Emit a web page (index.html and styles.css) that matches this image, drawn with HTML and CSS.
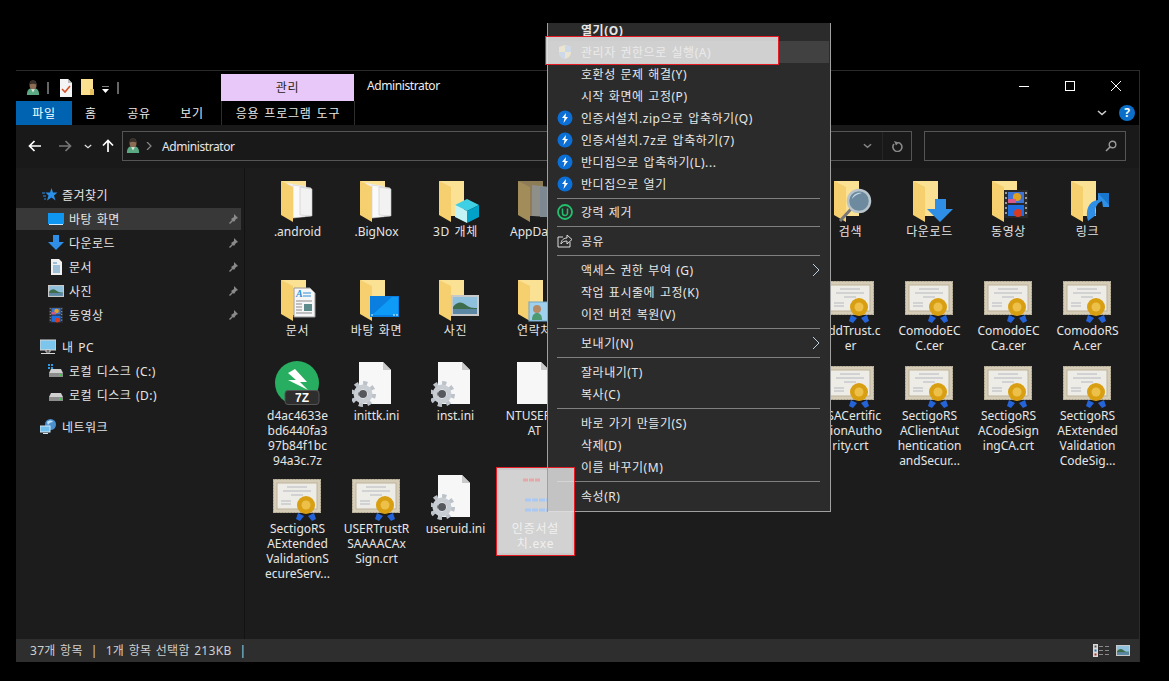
FILE: index.html
```html
<!DOCTYPE html>
<html lang="ko">
<head>
<meta charset="utf-8">
<title>Administrator</title>
<link rel="stylesheet" href="styles.css">
</head>
<body>
<svg class="defs" width="0" height="0" aria-hidden="true">
  <defs>
    <symbol id="person" viewBox="0 0 16 18">
      <path d="M1 17c0-5 2-8 7-8s7 3 7 8z" fill="#5aa982"/>
      <path d="M6 10l2 4 2-4z" fill="#e3eee5"/>
      <ellipse cx="8" cy="5.500" rx="4" ry="5" fill="#8c6c52"/>
      <path d="M4 5c0-3 2-5 4-5s4 2 4 5c-2-1-6-1-8 0z" fill="#38312b"/>
    </symbol>
    <symbol id="f" viewBox="0 0 48 48">
      <path d="M8 4h25v35H20z" fill="#fbe193"/>
      <path d="M8 4l12 6v35L8 38z" fill="#f6cf6f"/>
    </symbol>
    <symbol id="fdocs" viewBox="0 0 48 48">
      <path d="M8 4h25v35H20z" fill="#fbe193"/>
      <path d="M14 6l18 3v31l-18-3z" fill="#eeeeee"/>
      <path d="M20 8l18 3v28l-18 2z" fill="#fafafa" stroke="#d0d0d0" stroke-width=".6"/>
      <path d="M27 10l12 2v27l-12-1z" fill="#f2f2f2" stroke="#c8c8c8" stroke-width=".6"/>
      <path d="M8 4l12 6v35L8 38z" fill="#f6cf6f"/>
    </symbol>
    <symbol id="f3d" viewBox="0 0 48 48">
      <use href="#f" width="48" height="48"/>
      <path d="M24 28l12-6 12 6-12 6z" fill="#3fd0e6"/>
      <path d="M24 28l12 6v12l-12-6z" fill="#c2f3f5"/>
      <path d="M48 28l-12 6v12l12-6z" fill="#00a2c7"/>
    </symbol>
    <symbol id="fapp" viewBox="0 0 48 48">
      <path d="M8 4h25v35H20z" fill="#8d7c55"/>
      <path d="M22 8l18 2v30l-18-1z" fill="#8f8f8a"/>
      <path d="M30 10h10v30H30z" fill="#7d8892"/>
      <path d="M8 4l12 6v35L8 38z" fill="#a18c5a"/>
    </symbol>
    <symbol id="fdoc" viewBox="0 0 48 48">
      <use href="#f" width="48" height="48"/>
      <path d="M21 12h16l5 5v24H21z" fill="#f6f6f6" stroke="#9a9a9a"/>
      <text x="23" y="21" class="sym-a">A</text>
      <path d="M30 17h8M30 20h8" stroke="#2f8fd8"/>
      <path d="M23 25h16M23 28h6M23 31h6M23 34h6M23 37h16" stroke="#8a8a8a"/>
      <rect x="31" y="28" width="8" height="7" fill="#5d8a8a"/>
    </symbol>
    <symbol id="fdesk" viewBox="0 0 48 48">
      <use href="#f" width="48" height="48"/>
      <rect x="18" y="20" width="29" height="21" fill="#0a7fe0"/>
      <path d="M20 39l20-18h6v18z" fill="#0d9bf7"/>
      <path d="M19 39h2M41 39h2M44 39h2" stroke="#dff"/>
    </symbol>
    <symbol id="fpic" viewBox="0 0 48 48">
      <use href="#f" width="48" height="48"/>
      <use href="#photo" x="20" y="19" width="28" height="21"/>
    </symbol>
    <symbol id="photo" viewBox="0 0 28 21" preserveAspectRatio="none">
      <rect width="28" height="21" fill="#c9c9c9"/>
      <rect x="2" y="2" width="24" height="17" fill="#8fc0dc"/>
      <path d="M2 12c5-6 9-5 13-2s7 3 11 3v2H2z" fill="#3e6d4d"/>
      <rect x="2" y="14" width="24" height="5" fill="#5c87a4"/>
    </symbol>
    <symbol id="fcontact" viewBox="0 0 48 48">
      <use href="#f" width="48" height="48"/>
      <rect x="19" y="26" width="29" height="19" fill="#9fd0ee" stroke="#6fa6c8"/>
      <circle cx="27" cy="33" r="4" fill="#b78a66"/>
      <path d="M22 44c0-5 2-7 5-7s5 2 5 7z" fill="#4d9a72"/>
    </symbol>
    <symbol id="fsearch" viewBox="0 0 48 48">
      <use href="#f" width="48" height="48"/>
      <path d="M14 44l11-12" stroke="#777" stroke-width="3"/>
      <circle cx="33" cy="24" r="11" fill="#6d8a9e" stroke="#b9c4cb" stroke-width="2.500"/>
      <path d="M26 22c1-5 6-7 10-6-5 1-8 3-10 6z" fill="#c4dbe8"/>
    </symbol>
    <symbol id="fdown" viewBox="0 0 48 48">
      <use href="#f" width="48" height="48"/>
      <path d="M30 22h11v10h7L35 45 22 32h8z" fill="#2f8fe6"/>
    </symbol>
    <symbol id="film" viewBox="0 0 24 28">
      <rect width="24" height="28" fill="#2a2a2a"/>
      <path d="M1 2h2v2H1zM1 7h2v2H1zM1 12h2v2H1zM1 17h2v2H1zM1 22h2v2H1zM21 2h2v2h-2zM21 7h2v2h-2zM21 12h2v2h-2zM21 17h2v2h-2zM21 22h2v2h-2z" fill="#999"/>
      <rect x="4" y="2" width="16" height="11" fill="#3d74d6"/>
      <rect x="4" y="15" width="16" height="11" fill="#1f6ee0"/>
      <circle cx="13" cy="7" r="4" fill="#e0a020"/>
      <rect x="4" y="9" width="8" height="4" fill="#d85a8a"/>
      <circle cx="14" cy="23" r="4" fill="#d83a20"/>
    </symbol>
    <symbol id="fvideo" viewBox="0 0 48 48">
      <use href="#f" width="48" height="48"/>
      <use href="#film" x="20" y="13" width="24" height="28"/>
    </symbol>
    <symbol id="flink" viewBox="0 0 48 48">
      <use href="#f" width="48" height="48"/>
      <path d="M25 44c-3-10 0-20 10-21v-7l11 0v14h-6l-1-6c-5 2-8 7-6 14z" fill="#2f8fe6"/>
      <path d="M35 16l11 0v12z" fill="#1877cc"/>
    </symbol>
    <symbol id="cert" viewBox="0 0 48 48">
      <rect x="0" y="5" width="48" height="34" fill="#d6cdb9"/>
      <rect x=".5" y="5.500" width="47" height="33" fill="none" stroke="#a89f8a" stroke-dasharray="2 1"/>
      <rect x="4" y="9" width="40" height="26" fill="#eeece6" stroke="#bdb49c"/>
      <path d="M14 13h20M10 17h28M18 21h12M8 27h10M8 30h10" stroke="#b5b8c0"/>
      <path d="M25 39l-2 6 4 2 4-5zM41 39l2 6-4 2-4-5z" fill="#2464d8"/>
      <circle cx="33" cy="31" r="9" fill="#d99f13"/>
      <circle cx="33" cy="31" r="4.500" fill="#edc04a"/>
    </symbol>
    <symbol id="page" viewBox="0 0 48 48">
      <path d="M7 1h24l8 8v34H7z" fill="#f7f7f7"/>
      <path d="M31 1l8 8h-8z" fill="#c9c9c9"/>
    </symbol>
    <symbol id="gearpage" viewBox="0 0 48 48">
      <use href="#page" width="48" height="48"/>
      <circle cx="11" cy="33" r="11" fill="none" stroke="#bcc2c9" stroke-width="4" stroke-dasharray="4.200 4.400"/>
      <circle cx="11" cy="33" r="7" fill="none" stroke="#c8cdd3" stroke-width="5"/>
      <circle cx="11" cy="33" r="4" fill="#55585c"/>
    </symbol>
    <symbol id="zip" viewBox="0 0 48 48">
      <circle cx="24" cy="22" r="22" fill="#27ae60"/>
      <path d="M22 8l12 13h-7l8 8-20-10h8l-8-7z" fill="#fff"/>
      <rect x="12" y="29.500" width="34" height="14" rx="3" fill="#2e2e2e" stroke="#555"/>
      <text x="29" y="41" class="sym-7z">7Z</text>
    </symbol>
    <symbol id="bolt" viewBox="0 0 16 16">
      <circle cx="8" cy="8" r="7.500" fill="#0b6fd6"/>
      <path d="M9 3L5 8h2.500L6.500 13 11 7H8.500z" fill="#fff"/>
    </symbol>
    <symbol id="pin" viewBox="0 0 12 12">
      <path d="M7 1l4 4-2 1-2 3-1-1-3 3-1-1 3-3-1-1 3-2z" fill="#8a8a8a"/>
    </symbol>
    <symbol id="chev" viewBox="0 0 10 6">
      <path d="M1 1l4 3.500L9 1" fill="none" stroke="currentColor" stroke-width="1.600"/>
    </symbol>
    <symbol id="disk" viewBox="0 0 16 16">
      <path d="M3 6h10l2 4v4H1v-4z" fill="#d0d0d0"/>
      <rect x="1" y="10" width="14" height="4" fill="#8d8d8d"/>
      <rect x="11" y="11" width="2" height="2" fill="#3ed04a"/>
    </symbol>
  </defs>
</svg>

<div class="stage">
  <div class="window">
    <header class="titlebar">
      <div class="qat">
        <svg class="qi"><use href="#person"/></svg>
        <span class="qsep qsep-a"></span>
        <svg class="qi qnote" viewBox="0 0 14 18"><path d="M1 0h8l4 4v14H1z" fill="#f4f4f4"/><path d="M9 0l4 4H9z" fill="#bbb"/><path d="M3 10l3 3 5-6" fill="none" stroke="#d8502a" stroke-width="1.600"/></svg>
        <svg class="qi qfolder" viewBox="0 0 14 18"><rect width="12" height="16" fill="#fbe08f"/><rect x="9" y="10" width="4" height="6" fill="#e8c060"/></svg>
        <svg class="qdrop" viewBox="0 0 9 8"><path d="M1 0h7" stroke="#fff"/><path d="M1 3h7L4.500 7z" fill="#fff"/></svg>
        <span class="qsep qsep-b"></span>
      </div>
      <div class="manage">관리</div>
      <div class="wintitle">Administrator</div>
      <div class="wincontrols">
        <span class="wc"><svg viewBox="0 0 10 10"><path d="M0 5.500h10" stroke="#fff"/></svg></span>
        <span class="wc"><svg viewBox="0 0 10 10"><rect x=".5" y=".5" width="9" height="9" fill="none" stroke="#fff"/></svg></span>
        <span class="wc"><svg viewBox="0 0 10 10"><path d="M0 0l10 10M10 0L0 10" stroke="#fff"/></svg></span>
      </div>
    </header>

    <nav class="tabs">
      <span class="tab tab-file">파일</span>
      <span class="tab tab-home">홈</span>
      <span class="tab tab-share">공유</span>
      <span class="tab tab-view">보기</span>
      <span class="tab tab-tools">응용 프로그램 도구</span>
      <svg class="ribbon-chev"><use href="#chev"/></svg>
      <span class="help">?</span>
    </nav>

    <div class="toolbar">
      <span class="nb nb-back"><svg viewBox="0 0 14 12"><path d="M13 6H2M6.500 1L1.500 6l5 5" fill="none" stroke="#fff" stroke-width="1.700"/></svg></span>
      <span class="nb nb-fwd"><svg viewBox="0 0 14 12"><path d="M1 6h11M7.500 1l5 5-5 5" fill="none" stroke="#777" stroke-width="1.700"/></svg></span>
      <span class="nb nb-down"><svg class="small-chev"><use href="#chev"/></svg></span>
      <span class="nb nb-up"><svg viewBox="0 0 12 14"><path d="M6 13V2M1 6.500l5-5 5 5" fill="none" stroke="#fff" stroke-width="1.700"/></svg></span>
      <div class="addr">
        <svg class="addr-person"><use href="#person"/></svg>
        <svg class="addr-sep" viewBox="0 0 6 8"><path d="M1 0l4 4-4 4" fill="none" stroke="#888" stroke-width="1.200"/></svg>
        <span class="addr-text">Administrator</span>
        <svg class="addr-chev"><use href="#chev"/></svg>
        <span class="addr-div"></span>
        <svg class="addr-refresh" viewBox="0 0 12 12"><path d="M7 2.500a4.500 4.500 0 1 1-4 1.500" fill="none" stroke="#888" stroke-width="1.600"/><path d="M3 1l5 1.500-3 3z" fill="#888"/></svg>
      </div>
      <div class="search">
        <svg viewBox="0 0 12 12"><circle cx="7.500" cy="4.500" r="3.300" fill="none" stroke="#999" stroke-width="1.400"/><path d="M5 7l-4 4" stroke="#999" stroke-width="1.600"/></svg>
      </div>
    </div>

    <main class="main">
      <aside class="nav">
        <div class="navgroup">
          <div class="nr nr1"><svg viewBox="0 0 16 16"><path d="M9.500 1l1.500 4.500h4.500l-3.500 3 1.500 5L9.500 10.500 5 13.500l1.500-5-3-3h4.500z" fill="#2a8fe8"/><path d="M0 6h3M1 9h3M2 12h2" stroke="#2a8fe8"/></svg><span>즐겨찾기</span></div>
          <div class="nr nr2 nr-active"><svg viewBox="0 0 16 16"><rect y="2" width="16" height="11" fill="#0f95f2"/><path d="M1 13.500h14" stroke="#cdeaff"/></svg><span>바탕 화면</span><svg class="pin"><use href="#pin"/></svg></div>
          <div class="nr nr2"><svg viewBox="0 0 16 16"><path d="M5 0h6v7h5l-8 8-8-8h5z" fill="#2f8fe6"/></svg><span>다운로드</span><svg class="pin"><use href="#pin"/></svg></div>
          <div class="nr nr2"><svg viewBox="0 0 16 16"><path d="M3 0h8l3 3v13H3z" fill="#f0f0f0"/><path d="M5 4h4M5 7h7M5 9h7M5 11h7M5 13h7" stroke="#4a8fc0"/></svg><span>문서</span><svg class="pin"><use href="#pin"/></svg></div>
          <div class="nr nr2"><svg viewBox="0 0 16 16"><use href="#photo" y="2" width="16" height="12"/></svg><span>사진</span><svg class="pin"><use href="#pin"/></svg></div>
          <div class="nr nr2"><svg viewBox="0 0 16 16"><use href="#film" x="1" width="14" height="16"/></svg><span>동영상</span><svg class="pin"><use href="#pin"/></svg></div>
        </div>
        <div class="navgroup">
          <div class="nr nr1 nr-pc"><svg viewBox="0 0 16 16"><rect y="1" width="16" height="10" fill="#7cc6ee" stroke="#d8d8d8"/><path d="M6 11h4v2H6zM1 14.500h14" stroke="#d8d8d8"/></svg><span>내 PC</span></div>
          <div class="nr nr2"><svg viewBox="0 0 16 16"><use href="#disk" width="16" height="16"/><path d="M0 1h2v2H0zM3 1h2v2H3zM0 4h2v2H0zM3 4h2v2H3z" fill="#2a9be8"/></svg><span>로컬 디스크 (C:)</span></div>
          <div class="nr nr2"><svg viewBox="0 0 16 16"><use href="#disk" width="16" height="16"/></svg><span>로컬 디스크 (D:)</span></div>
        </div>
        <div class="navgroup">
          <div class="nr nr1 nr-pc"><svg viewBox="0 0 16 16"><circle cx="10.500" cy="5.500" r="5.500" fill="#4a90d0"/><path d="M7 3c2-2 5-2 6 0-2 0-4 1-5 3z" fill="#bfe0f5"/><rect y="7" width="10" height="6" fill="#6fbdea" stroke="#cfe6f5"/><path d="M3 14.500h5" stroke="#cfe6f5"/></svg><span>네트워크</span></div>
        </div>
      </aside>

      <section class="files">
        <div class="cell"><svg class="ico"><use href="#fdocs"/></svg><p class="lb">.android</p></div>
        <div class="cell"><svg class="ico"><use href="#fdocs"/></svg><p class="lb">.BigNox</p></div>
        <div class="cell"><svg class="ico"><use href="#f3d"/></svg><p class="lb lb-ko">3D 개체</p></div>
        <div class="cell"><svg class="ico"><use href="#fapp"/></svg><p class="lb">AppData</p></div>
        <div class="cell"></div><div class="cell"></div><div class="cell"></div>
        <div class="cell"><svg class="ico"><use href="#fsearch"/></svg><p class="lb lb-ko">검색</p></div>
        <div class="cell"><svg class="ico"><use href="#fdown"/></svg><p class="lb lb-ko">다운로드</p></div>
        <div class="cell"><svg class="ico"><use href="#fvideo"/></svg><p class="lb lb-ko">동영상</p></div>
        <div class="cell"><svg class="ico"><use href="#flink"/></svg><p class="lb lb-ko">링크</p></div>

        <div class="cell"><svg class="ico"><use href="#fdoc"/></svg><p class="lb lb-ko">문서</p></div>
        <div class="cell"><svg class="ico"><use href="#fdesk"/></svg><p class="lb lb-ko">바탕 화면</p></div>
        <div class="cell"><svg class="ico"><use href="#fpic"/></svg><p class="lb lb-ko">사진</p></div>
        <div class="cell"><svg class="ico"><use href="#fcontact"/></svg><p class="lb lb-ko">연락처</p></div>
        <div class="cell"></div><div class="cell"></div><div class="cell"></div>
        <div class="cell"><svg class="ico"><use href="#cert"/></svg><p class="lb">AddTrust.c<br>er</p></div>
        <div class="cell"><svg class="ico"><use href="#cert"/></svg><p class="lb">ComodoEC<br>C.cer</p></div>
        <div class="cell"><svg class="ico"><use href="#cert"/></svg><p class="lb">ComodoEC<br>Ca.cer</p></div>
        <div class="cell"><svg class="ico"><use href="#cert"/></svg><p class="lb">ComodoRS<br>A.cer</p></div>

        <div class="cell"><svg class="ico"><use href="#zip"/></svg><p class="lb">d4ac4633e<br>bd6440fa3<br>97b84f1bc<br>94a3c.7z</p></div>
        <div class="cell"><svg class="ico"><use href="#gearpage"/></svg><p class="lb">inittk.ini</p></div>
        <div class="cell"><svg class="ico"><use href="#gearpage"/></svg><p class="lb">inst.ini</p></div>
        <div class="cell"><svg class="ico"><use href="#page"/></svg><p class="lb">NTUSER.D<br>AT</p></div>
        <div class="cell"></div><div class="cell"></div><div class="cell"></div>
        <div class="cell"><svg class="ico"><use href="#cert"/></svg><p class="lb">RSACertific<br>ationAutho<br>rity.crt</p></div>
        <div class="cell"><svg class="ico"><use href="#cert"/></svg><p class="lb">SectigoRS<br>AClientAut<br>hentication<br>andSecur...</p></div>
        <div class="cell"><svg class="ico"><use href="#cert"/></svg><p class="lb">SectigoRS<br>ACodeSign<br>ingCA.crt</p></div>
        <div class="cell"><svg class="ico"><use href="#cert"/></svg><p class="lb">SectigoRS<br>AExtended<br>Validation<br>CodeSig...</p></div>

        <div class="cell"><svg class="ico"><use href="#cert"/></svg><p class="lb">SectigoRS<br>AExtended<br>ValidationS<br>ecureServ...</p></div>
        <div class="cell"><svg class="ico"><use href="#cert"/></svg><p class="lb">USERTrustR<br>SAAAACAx<br>Sign.crt</p></div>
        <div class="cell"><svg class="ico"><use href="#gearpage"/></svg><p class="lb">useruid.ini</p></div>
        <div class="cell cell-sel">
          <svg class="ico ico-exe" viewBox="0 0 48 48"><path d="M12 6h18" stroke="#e6a7a7" stroke-width="3" stroke-dasharray="5 1"/><path d="M14 26h22" stroke="#a9c8f2" stroke-width="3" stroke-dasharray="6 1"/><path d="M14 36h24" stroke="#a9c8f2" stroke-width="3" stroke-dasharray="6 1"/></svg>
          <p class="lb lb-sel">인증서설<br>치.exe</p>
        </div>
      </section>
    </main>

    <footer class="status">
      <span class="st-a">37개 항목</span><span class="st-bar">|</span><span class="st-b">1개 항목 선택함 213KB</span><span class="st-bar">|</span>
      <span class="st-views">
        <svg class="st-list" viewBox="0 0 16 13"><rect width="5" height="13" fill="#d8d8d8"/><rect x="1.500" y="1.500" width="2" height="2" fill="#555"/><rect x="1.500" y="5.500" width="2" height="2" fill="#2a6fb0"/><rect x="1.500" y="9.500" width="2" height="2" fill="#b03030"/><path d="M6 2.500h4M12 2.500h4M6 6.500h4M12 6.500h4M6 10.500h4M12 10.500h4" stroke="#8a8a8a"/></svg>
        <svg class="st-thumb"><use href="#photo"/></svg>
      </span>
    </footer>
  </div>
</div>

<div class="menu">
  <div class="mlist">
    <div class="mi mi-bold"><i class="mic"></i>열기(O)</div>
    <div class="mi mi-hover"><svg class="mic" viewBox="0 0 16 16"><path d="M8 1l6 2v5c0 4-3 6-6 7-3-1-6-3-6-7V3z" fill="#f0c040"/><path d="M8 1l6 2v5H8zM8 8v7c-3-1-6-3-6-7z" fill="#2a7be0"/></svg>관리자 권한으로 실행(A)</div>
    <div class="mi"><i class="mic"></i>호환성 문제 해결(Y)</div>
    <div class="mi"><i class="mic"></i>시작 화면에 고정(P)</div>
    <div class="mi"><svg class="mic"><use href="#bolt"/></svg>인증서설치.zip으로 압축하기(Q)</div>
    <div class="mi"><svg class="mic"><use href="#bolt"/></svg>인증서설치.7z로 압축하기(7)</div>
    <div class="mi"><svg class="mic"><use href="#bolt"/></svg>반디집으로 압축하기(L)...</div>
    <div class="mi"><svg class="mic"><use href="#bolt"/></svg>반디집으로 열기</div>
    <div class="msep msep-tight"></div>
    <div class="mi"><svg class="mic" viewBox="0 0 16 16"><circle cx="8" cy="8" r="7" fill="none" stroke="#22c06e" stroke-width="1.800"/><path d="M5.500 4.500V9a2.500 2.500 0 0 0 5 0V4.500" fill="none" stroke="#22c06e" stroke-width="1.500"/></svg>강력 제거</div>
    <div class="msep"></div>
    <div class="mi"><svg class="mic" viewBox="0 0 16 16"><path d="M6 4H1v10h12V9" fill="none" stroke="#ddd"/><path d="M4 11c0-4 3-6 6-6V2l5 4.500L10 11V8c-3 0-5 1-6 3z" fill="none" stroke="#ddd"/></svg>공유</div>
    <div class="msep"></div>
    <div class="mi"><i class="mic"></i>액세스 권한 부여 (G)<svg class="marrow" viewBox="0 0 8 14"><path d="M1 1l6 6-6 6" fill="none" stroke="#bcd0e0"/></svg></div>
    <div class="mi"><i class="mic"></i>작업 표시줄에 고정(K)</div>
    <div class="mi"><i class="mic"></i>이전 버전 복원(V)</div>
    <div class="msep"></div>
    <div class="mi"><i class="mic"></i>보내기(N)<svg class="marrow" viewBox="0 0 8 14"><path d="M1 1l6 6-6 6" fill="none" stroke="#bcd0e0"/></svg></div>
    <div class="msep"></div>
    <div class="mi"><i class="mic"></i>잘라내기(T)</div>
    <div class="mi"><i class="mic"></i>복사(C)</div>
    <div class="msep"></div>
    <div class="mi"><i class="mic"></i>바로 가기 만들기(S)</div>
    <div class="mi"><i class="mic"></i>삭제(D)</div>
    <div class="mi"><i class="mic"></i>이름 바꾸기(M)</div>
    <div class="msep"></div>
    <div class="mi"><i class="mic"></i>속성(R)</div>
  </div>
</div>
<div class="mark mark-run"></div>
<div class="mark mark-exe"></div>
</body>
</html>
```

FILE: styles.css
```css
* { box-sizing: border-box; }
html, body { margin: 0; height: 100%; }
body {
  background: #000;
  color: #e6e6e6;
  font: 12px/15px "Noto Sans", "Noto Sans CJK KR", sans-serif;
  overflow: hidden;
}
.defs { position: absolute; }
.sym-a { font: italic 700 10px "Liberation Serif", serif; fill: #2f8fd8; }
.sym-7z { font: 700 12px "Liberation Sans", sans-serif; fill: #fff; text-anchor: middle; }

.stage { height: 681px; padding: 70px 29px 19px 16px; }
.window {
  height: 592px;
  display: flex;
  flex-direction: column;
  border-top: 1px solid #2b2b2b;
  border-right: 1px solid #2b2b2b;
}

/* title bar */
.titlebar { height: 30px; display: flex; background: #000; flex: none; }
.qat { width: 205px; display: flex; align-items: center; padding: 3px 0 0 10px; }
.qi { width: 14px; height: 18px; }
.qsep { width: 2px; height: 12px; background: #666; }
.qsep-a { margin: 0 10px 0 7px; }
.qsep-b { margin: 0 0 0 7px; }
.qnote { margin-right: 8px; }
.qfolder { margin-right: 6px; }
.qdrop { width: 9px; height: 8px; margin-top: 4px; }
.manage {
  width: 133px; margin-top: 3px; letter-spacing: .6px;
  background: #e8c8f8; color: #222;
  display: flex; align-items: center; justify-content: center;
}
.wintitle { padding-left: 13px; line-height: 30px; color: #eee; letter-spacing: -.4px; }
.wincontrols { margin-left: auto; display: flex; }
.wc { width: 46px; height: 29px; display: flex; align-items: center; justify-content: center; }
.wc svg { width: 10px; height: 10px; }

/* ribbon tabs */
.tabs { height: 24px; display: flex; align-items: stretch; background: #000; flex: none; padding-right: 4px; }
.tab { display: flex; align-items: center; justify-content: center; color: #e8e8e8; letter-spacing: .8px; word-spacing: 1px; }
.tab-file { width: 56px; background: #0063b1; color: #fff; }
.tab-home { width: 38px; }
.tab-share { width: 58px; }
.tab-view { width: 48px; margin-right: 5px; }
.tab-tools { width: 134px; border-left: 1px solid #2e2e2e; border-right: 1px solid #2e2e2e; }
.ribbon-chev { width: 10px; height: 6px; margin: 9px 0 0 auto; color: #ccc; }
.help {
  width: 16px; height: 16px; margin: 4px 0 0 12px; border-radius: 50%;
  background: #0b6fc9; color: #fff; font-weight: 700; text-align: center; line-height: 16px;
}

/* toolbar */
.toolbar { height: 43px; background: #191919; display: flex; align-items: flex-start; padding: 6px 13px 0 4px; flex: none; }
.nb { height: 30px; display: flex; align-items: center; justify-content: center; }
.nb svg { width: 14px; height: 12px; }
.nb-back, .nb-fwd { width: 30px; }
.nb-down { width: 16px; }
.nb-down .small-chev { width: 8px; height: 5px; color: #ddd; }
.nb-up { width: 24px; margin-right: 2px; }
.nb-up svg { width: 12px; height: 14px; }
.addr {
  width: 791px; height: 30px; border: 1px solid #555;
  display: flex; align-items: center; padding-left: 3px;
}
.addr-person { width: 14px; height: 16px; }
.addr-sep { width: 6px; height: 8px; margin-left: 6px; }
.addr-text { margin-left: 10px; color: #e6e6e6; letter-spacing: -.4px; }
.addr-chev { width: 9px; height: 6px; margin-left: auto; color: #888; }
.addr-div { width: 1px; height: 28px; background: #262626; margin: 0 8px 0 10px; }
.addr-refresh { width: 12px; height: 12px; margin-right: 8px; }
.search {
  width: 202px; height: 30px; margin-left: 12px; border: 1px solid #555;
  display: flex; align-items: center; justify-content: flex-end; padding-right: 8px;
}
.search svg { width: 12px; height: 12px; }

/* main */
.main { flex: 1; min-height: 0; display: flex; background: #1c1c1c; }
.nav {
  width: 228px; flex: none; padding-top: 16px;
  display: flex; flex-direction: column; gap: 10px;
}
.navgroup { display: flex; flex-direction: column; gap: 2px; width: 225px; }
.nr { height: 22px; display: flex; align-items: center; color: #e6e6e6; letter-spacing: .5px; word-spacing: 1px; }
.nr > svg:first-child { width: 16px; height: 16px; flex: none; }
.nr1 { padding-left: 26px; gap: 4px; }
.nr-pc { padding-left: 24px; gap: 6px; }
.nr2 { padding-left: 32px; gap: 5px; }
.nr-active { background: #383838; }
.pin { width: 12px; height: 12px; margin-left: auto; margin-right: 2px; }

.files {
  flex: 1; min-width: 0;
  border-left: 1px solid #121212;
  padding: 2px 0 0 13px;
  display: grid;
  grid-template-columns: repeat(11, 79px);
  grid-template-rows: 99px 85px 113px auto;
  align-items: start;
}
.cell { padding-top: 7px; }
.ico { display: block; width: 48px; height: 48px; margin-left: 15px; }
.lb { margin: -1px 0 0; text-align: center; white-space: nowrap; color: #e6e6e6; line-height: 15px; }
.lb-ko { letter-spacing: .6px; word-spacing: 1px; }

.cell-sel {
  background: #d2d2d2;
  box-shadow: inset 0 0 0 1px #e31c25, inset 0 0 0 3px #c8c8c8;
  margin: 0 -1px 0 1px;
  padding-bottom: 5px;
}
.lb-sel { color: #f0f0f0; letter-spacing: .8px; }

/* status bar */
.status {
  height: 23px; flex: none; background: #2e2e2e; color: #cfcfcf; letter-spacing: .3px; word-spacing: 1px;
  display: flex; align-items: center; padding-left: 14px;
}
.st-bar { margin: 0 8px 0 8px; }
.st-views { margin-left: auto; display: flex; align-items: center; gap: 7px; padding-right: 9px; }
.st-list { width: 16px; height: 13px; }
.st-thumb { width: 14px; height: 11px; }

/* context menu */
.menu {
  position: absolute; left: 547px; top: 23px; width: 284px; height: 489px;
  overflow: hidden; background: #2b2b2b;
  border: 1px solid #a0a0a0; border-top: 0;
  letter-spacing: .55px; word-spacing: 1px;
  z-index: 2;
}
.mlist { margin-top: -4px; }
.mi {
  height: 22px; display: flex; align-items: center;
  padding: 0 10px 0 9px; color: #e6e6e6;
}
.mi-bold { font-weight: 700; }
.mi-hover { background: #414141; margin: 0 1px; padding-left: 8px; }
.mic { width: 16px; height: 16px; margin-right: 8px; flex: none; display: block; }
.marrow { width: 8px; height: 14px; margin-left: auto; }
.msep { height: 7px; display: flex; align-items: center; padding: 0 10px 0 9px; }
.msep::before { content: ""; flex: 1; height: 1px; background: #808080; }
.msep-tight { height: 6px; }

.mark { position: absolute; z-index: 3; }
.mark-run {
  left: 545px; top: 36px; width: 234px; height: 29px;
  background: rgba(234, 234, 234, .85);
  border: 1px solid #e31c25;
}
.mark-exe {
  left: 548px; top: 467px; width: 27px; height: 45px;
  background: rgba(234, 234, 234, .8);
  border-top: 1px solid #e31c25;
  border-right: 1px solid #e31c25;
}
```
